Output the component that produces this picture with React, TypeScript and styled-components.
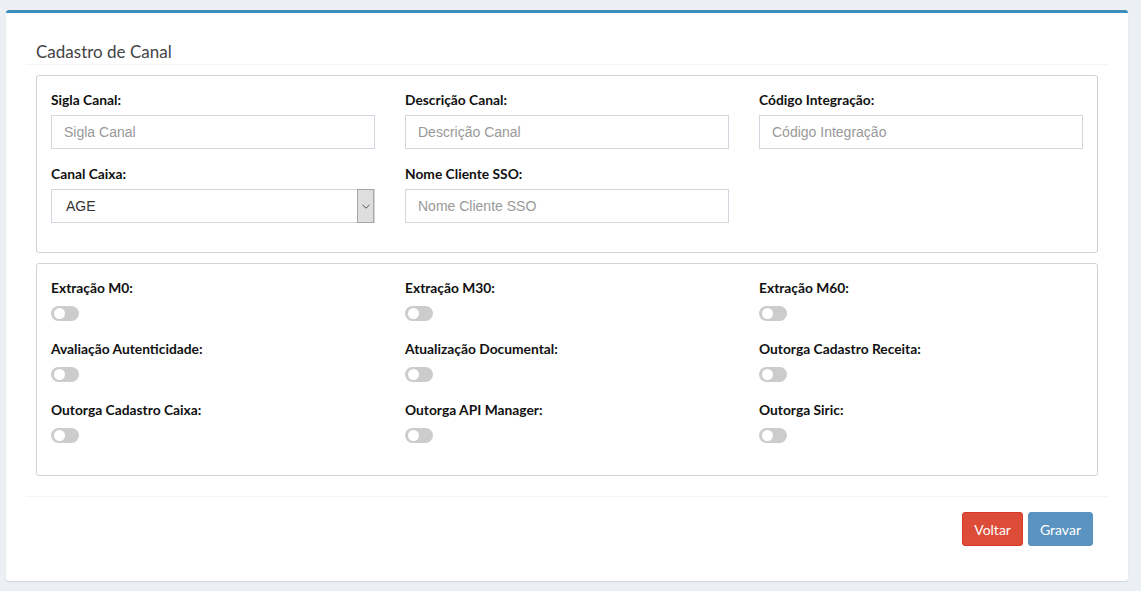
import React from "react";
import styled, { createGlobalStyle } from "styled-components";

const GlobalStyle = createGlobalStyle`
  html, body {
    margin: 0;
    padding: 0;
    background: #ecf0f5;
  }
  body {
    font-family: "Lato", "Liberation Sans", Arial, sans-serif;
    color: #333;
  }
  * {
    box-sizing: border-box;
  }
`;

const Page = styled.div`
  padding: 10px 13px 10px 6px;
`;

const Card = styled.div`
  background: #fff;
  border-top: 3px solid #3c8dbc;
  border-radius: 3px;
  box-shadow: 0 1px 1px rgba(0, 0, 0, 0.12);
  padding-bottom: 35px;
`;

const CardHeader = styled.div`
  margin: 0 20px;
  padding: 29px 10px 2px;
  border-bottom: 1px solid #f4f4f4;
`;

const Title = styled.h3`
  margin: 0;
  font-size: 17px;
  line-height: 20px;
  font-weight: 400;
  color: #444;
`;

const CardBody = styled.div`
  padding: 10px 30px 20px;
  display: flex;
  flex-direction: column;
  gap: 10px;
`;

const Fieldset = styled.div<{ $bottom: number; $rowGap: number }>`
  border: 1px solid #d2d2d2;
  border-radius: 3px;
  padding: 15px 14px ${(p) => p.$bottom}px;
  display: grid;
  grid-template-columns: repeat(3, 324px);
  column-gap: 30px;
  row-gap: ${(p) => p.$rowGap}px;
`;

const Field = styled.div`
  display: flex;
  flex-direction: column;
`;

const Label = styled.label<{ $gap: number }>`
  font-size: 13.8px;
  line-height: 18px;
  font-weight: 700;
  color: #111;
  margin-bottom: ${(p) => p.$gap}px;
`;

const Input = styled.input`
  height: 34px;
  width: 100%;
  border: 1px solid #d2d6de;
  border-radius: 0;
  padding: 6px 12px;
  font-family: "Liberation Sans", Arial, sans-serif;
  font-size: 14px;
  color: #555;
  outline: none;

  &::placeholder {
    color: #999;
  }
`;

const SelectWrap = styled.div`
  height: 34px;
  display: flex;
  border: 1px solid #d2d6de;
  background: #fff;
`;

const Select = styled.select`
  flex: 1;
  appearance: none;
  border: none;
  background: transparent;
  padding: 0 14px;
  font-family: "Liberation Sans", Arial, sans-serif;
  font-size: 14px;
  color: #333;
  outline: none;
`;

const ArrowBox = styled.div`
  width: 17px;
  display: flex;
  align-items: center;
  justify-content: center;
  background: #dedede;
  border: 1px solid #a6a6a6;
  margin: -1px 0 -1px 0;
`;

const Toggle = styled.span`
  width: 28px;
  height: 15px;
  border-radius: 8px;
  background: #cccccc;
  position: relative;
  display: inline-block;

  &::after {
    content: "";
    position: absolute;
    top: 2px;
    left: 3px;
    width: 11px;
    height: 11px;
    border-radius: 50%;
    background: #fff;
  }
`;

const CardFooter = styled.div`
  margin: 0 20px;
  padding: 15px 15px 0;
  border-top: 1px solid #f4f4f4;
  display: flex;
  justify-content: flex-end;
  gap: 5px;
`;

const Button = styled.button<{ $variant: "danger" | "primary" }>`
  height: 34px;
  padding: 0 11px;
  border-radius: 3px;
  font-family: "Lato", "Liberation Sans", Arial, sans-serif;
  font-size: 14px;
  color: #fff;
  cursor: pointer;
  background: ${(p) => (p.$variant === "danger" ? "#dd4b39" : "#5b93c0")};
  border: 1px solid ${(p) => (p.$variant === "danger" ? "#d73925" : "#5b93c0")};
`;

const textFields = [
  { label: "Sigla Canal:", placeholder: "Sigla Canal" },
  { label: "Descrição Canal:", placeholder: "Descrição Canal" },
  { label: "Código Integração:", placeholder: "Código Integração" },
];

const switches = [
  "Extração M0:",
  "Extração M30:",
  "Extração M60:",
  "Avaliação Autenticidade:",
  "Atualização Documental:",
  "Outorga Cadastro Receita:",
  "Outorga Cadastro Caixa:",
  "Outorga API Manager:",
  "Outorga Siric:",
];

export default function App() {
  return (
    <>
      <GlobalStyle />
      <Page>
        <Card>
          <CardHeader>
            <Title>Cadastro de Canal</Title>
          </CardHeader>
          <CardBody>
            <Fieldset $bottom={29} $rowGap={16}>
              {textFields.map((f) => (
                <Field key={f.label}>
                  <Label $gap={6}>{f.label}</Label>
                  <Input placeholder={f.placeholder} />
                </Field>
              ))}
              <Field>
                <Label $gap={6}>Canal Caixa:</Label>
                <SelectWrap>
                  <Select defaultValue="AGE">
                    <option value="AGE">AGE</option>
                  </Select>
                  <ArrowBox>
                    <svg width="8" height="5" viewBox="0 0 8 5" fill="none">
                      <path d="M0.5 0.8 L4 4.2 L7.5 0.8" stroke="#555" strokeWidth="1" />
                    </svg>
                  </ArrowBox>
                </SelectWrap>
              </Field>
              <Field>
                <Label $gap={6}>Nome Cliente SSO:</Label>
                <Input placeholder="Nome Cliente SSO" />
              </Field>
            </Fieldset>
            <Fieldset $bottom={32} $rowGap={19}>
              {switches.map((s) => (
                <Field key={s}>
                  <Label $gap={9}>{s}</Label>
                  <Toggle />
                </Field>
              ))}
            </Fieldset>
          </CardBody>
          <CardFooter>
            <Button $variant="danger">Voltar</Button>
            <Button $variant="primary">Gravar</Button>
          </CardFooter>
        </Card>
      </Page>
    </>
  );
}
